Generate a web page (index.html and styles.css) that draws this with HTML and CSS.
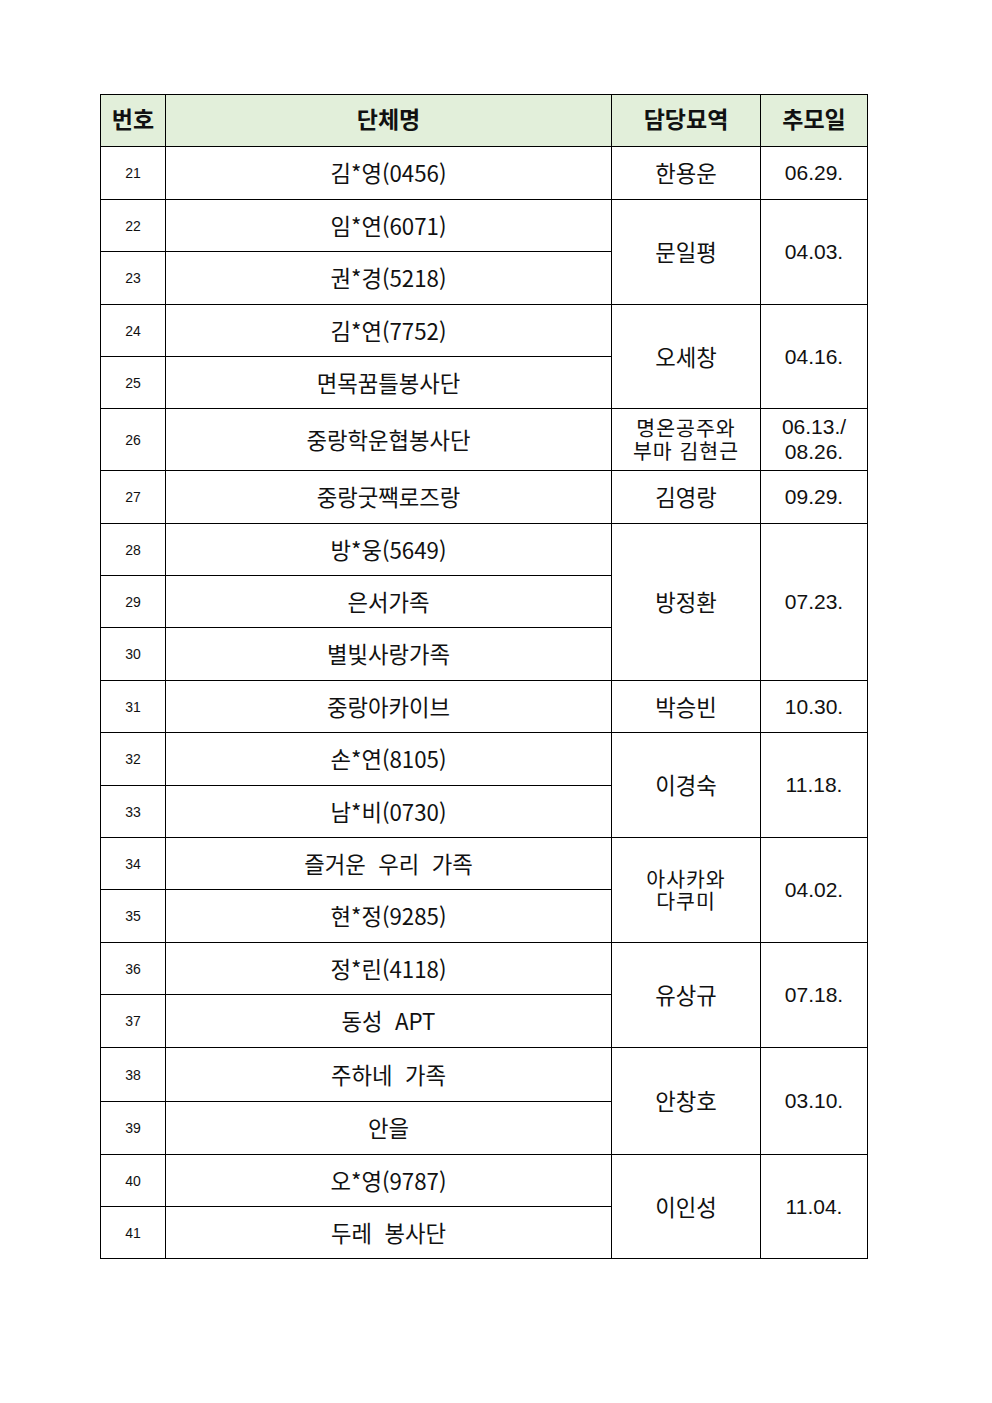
FILE: index.html
```html
<!DOCTYPE html>
<html lang="ko">
<head>
<meta charset="utf-8">
<link rel="stylesheet" href="styles.css">
</head>
<body>
<div class="page">
<table class="list">
  <colgroup>
    <col class="c1"><col class="c2"><col class="c3"><col class="c4">
  </colgroup>
  <thead>
    <tr class="h52"><th>번호</th><th>단체명</th><th>담당묘역</th><th>추모일</th></tr>
  </thead>
  <tbody>
    <tr class="h53"><td class="num">21</td><td>김*영(0456)</td><td>한용운</td><td class="date">06.29.</td></tr>
    <tr class="h52"><td class="num">22</td><td>임*연(6071)</td><td rowspan="2">문일평</td><td rowspan="2" class="date">04.03.</td></tr>
    <tr class="h53"><td class="num">23</td><td>권*경(5218)</td></tr>
    <tr class="h52"><td class="num">24</td><td>김*연(7752)</td><td rowspan="2">오세창</td><td rowspan="2" class="date">04.16.</td></tr>
    <tr class="h52"><td class="num">25</td><td>면목꿈틀봉사단</td></tr>
    <tr class="h62"><td class="num">26</td><td>중랑학운협봉사단</td><td class="two">명온공주와<br>부마 김현근</td><td class="date twodate">06.13./<br>08.26.</td></tr>
    <tr class="h53"><td class="num">27</td><td>중랑굿짹로즈랑</td><td>김영랑</td><td class="date">09.29.</td></tr>
    <tr class="h52"><td class="num">28</td><td>방*웅(5649)</td><td rowspan="3">방정환</td><td rowspan="3" class="date">07.23.</td></tr>
    <tr class="h52"><td class="num">29</td><td>은서가족</td></tr>
    <tr class="h53"><td class="num">30</td><td>별빛사랑가족</td></tr>
    <tr class="h52"><td class="num">31</td><td>중랑아카이브</td><td>박승빈</td><td class="date">10.30.</td></tr>
    <tr class="h53"><td class="num">32</td><td>손*연(8105)</td><td rowspan="2">이경숙</td><td rowspan="2" class="date">11.18.</td></tr>
    <tr class="h52"><td class="num">33</td><td>남*비(0730)</td></tr>
    <tr class="h52"><td class="num">34</td><td class="pre">즐거운  우리  가족</td><td rowspan="2" class="two">아사카와<br>다쿠미</td><td rowspan="2" class="date">04.02.</td></tr>
    <tr class="h53"><td class="num">35</td><td>현*정(9285)</td></tr>
    <tr class="h52"><td class="num">36</td><td>정*린(4118)</td><td rowspan="2">유상규</td><td rowspan="2" class="date">07.18.</td></tr>
    <tr class="h53"><td class="num">37</td><td class="pre">동성  APT</td></tr>
    <tr class="h54"><td class="num">38</td><td class="pre">주하네  가족</td><td rowspan="2">안창호</td><td rowspan="2" class="date">03.10.</td></tr>
    <tr class="h53"><td class="num">39</td><td>안을</td></tr>
    <tr class="h52"><td class="num">40</td><td>오*영(9787)</td><td rowspan="2">이인성</td><td rowspan="2" class="date">11.04.</td></tr>
    <tr class="h52"><td class="num">41</td><td class="pre">두레  봉사단</td></tr>
  </tbody>
</table>
</div>
</body>
</html>
```

FILE: styles.css
```css
html, body {
  margin: 0;
  padding: 0;
  background: #ffffff;
}
.page {
  padding: 94px 0 0 100px;
}
.list {
  border-collapse: collapse;
  table-layout: fixed;
  width: 767px;
  font-family: "Noto Sans CJK KR", "Noto Sans", sans-serif;
  color: #111;
}
.c1 { width: 65px; }
.c2 { width: 446px; }
.c3 { width: 149px; }
.c4 { width: 107px; }
.list th, .list td {
  border: 1px solid #000;
  padding: 0 0 2px 0;
  text-align: center;
  vertical-align: middle;
  font-size: 22.3px;
  line-height: 26px;
  font-weight: 400;
}
.list th {
  background: #e2efda;
  font-weight: 700;
  font-size: 23px;
  color: #111;
  padding-bottom: 5px;
}
.list td.num {
  font-family: "Liberation Sans", Arial, sans-serif;
  font-size: 14px;
  padding-bottom: 0;
}
.list td.date {
  font-family: "Liberation Sans", Arial, sans-serif;
  font-size: 21px;
  padding-bottom: 0;
}
.list td.twodate {
  line-height: 25px;
  padding-bottom: 1px;
}
.list td.two {
  font-size: 20.5px;
  letter-spacing: 1px;
  line-height: 22.5px;
  padding-bottom: 2px;
}
.list td.pre {
  white-space: pre;
}
.h52 { height: 52px; }
.h53 { height: 53px; }
.h54 { height: 54px; }
.h62 { height: 62px; }
```
